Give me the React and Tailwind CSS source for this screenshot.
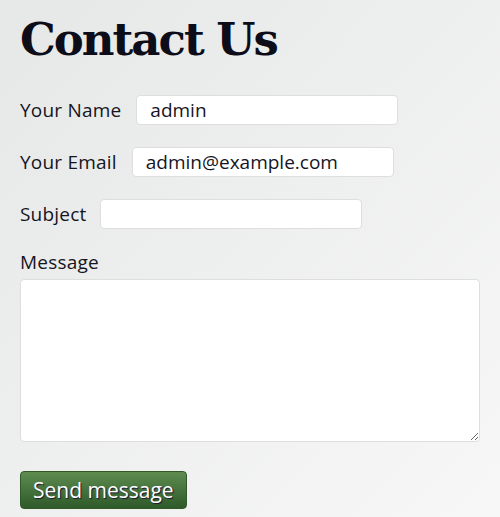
import React from 'react';

const label = "text-[19px] text-[#15151e] leading-none tracking-[0.2px]";
const input =
  "h-[30px] w-[262px] rounded-[4px] border border-[#dedede] bg-white px-[13px] text-[19px] text-[#15151e] outline-none";

export default function App() {
  return (
    <div
      className="min-h-[517px] w-full overflow-hidden bg-gradient-to-br from-[#e6e8e7] to-[#f6f7f6] px-5 pt-[17px]"
      style={{ fontFamily: '"Open Sans", Lato, sans-serif' }}
    >
      <h1
        className="text-[45px] font-bold leading-none text-[#0d0d1a] tracking-[-2px]"
        style={{ fontFamily: '"DejaVu Serif", serif' }}
      >
        Contact Us
      </h1>

      <form className="mt-[33px] flex flex-col" onSubmit={(e) => e.preventDefault()}>
        <div className="flex items-center gap-[15px]">
          <label className={label}>Your Name</label>
          <input className={input} defaultValue="admin" />
        </div>
        <div className="mt-[22px] flex items-center gap-[15px]">
          <label className={label}>Your Email</label>
          <input className={input} defaultValue="admin@example.com" />
        </div>
        <div className="mt-[22px] flex items-center gap-[14px]">
          <label className={label}>Subject</label>
          <input className={input} defaultValue="" />
        </div>

        <label className={label + " mt-[24px]"}>Message</label>
        <textarea className="mt-[7px] h-[163px] w-full rounded-[4px] border border-[#dedede] bg-white p-2 outline-none" />

        <div className="mt-[29px]">
          <button
            type="submit"
            className="h-[38px] rounded-[4px] border border-[#2f5a28] bg-gradient-to-b from-[#5e8c50] to-[#2f5a2a] px-[12px] text-[21px] leading-none text-white [text-shadow:1px_1px_1px_#1a1530]"
          >
            Send message
          </button>
        </div>
      </form>
    </div>
  );
}
